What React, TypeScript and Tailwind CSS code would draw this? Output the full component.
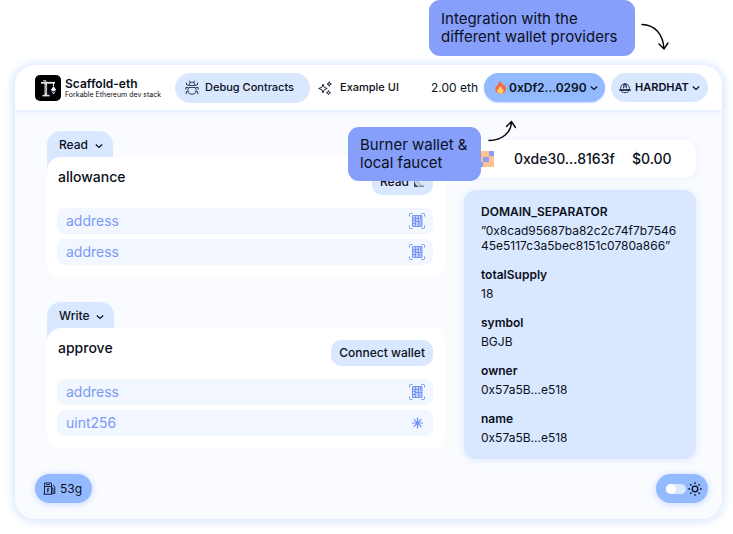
import type { ReactNode } from "react";

type IconProps = { className?: string };

function Chevron({ className = "" }: IconProps) {
  return (
    <svg viewBox="0 0 8 8" className={`h-2 w-2 ${className}`} fill="none" stroke="#0b1020" strokeWidth="1.2" aria-hidden="true">
      <path d="M.8 2.500 4 5.500 7.200 2.500" />
    </svg>
  );
}

function Logo() {
  return (
    <svg viewBox="0 0 26 26" className="h-[26px] w-[26px] shrink-0" aria-hidden="true">
      <rect width="26" height="26" rx="5" fill="#000" />
      <path d="M6 7.800h14" stroke="#e4e6ea" strokeWidth="1.800" fill="none" />
      <path d="M8 5.800h3v2M18.500 8v3" stroke="#e4e6ea" strokeWidth="1" fill="none" />
      <path d="M10.800 8v12.500" stroke="#d5d8de" strokeWidth="2.600" />
      <path d="m10 10 1.600 2-1.600 2 1.600 2-1.600 2" stroke="#5b616d" strokeWidth=".6" fill="none" />
      <path d="M7.500 20.600h7" stroke="#e4e6ea" strokeWidth="1.600" />
      <path d="m18.500 11 2.700 4-2.700 1.500-2.700-1.500z" fill="#f2f6ff" />
      <path d="m16 16 2.500 1.500L21 16l-2.500 3.500z" fill="#a9c3ff" />
    </svg>
  );
}

function BugIcon() {
  return (
    <svg viewBox="0 0 14 15" className="h-[15px] w-[14px]" fill="none" stroke="#1d2b4d" strokeWidth=".9" strokeLinejoin="round" aria-hidden="true">
      <path d="M4.300 5.500V4.300a2.700 2.300 0 0 1 5.400 0v1.200zM5.200 2.600 4.200.7M8.800 2.600l1-1.900" />
      <path d="M4 7.500h6c.9 1 1.100 2 1.100 3a4.100 3.700 0 0 1-8.200 0c0-1 .2-2 1.100-3z" />
      <path d="M4.300 5.500 1.500 4.800V2.500M9.700 5.500l2.800-.7V2.500M3.700 7.700.8 7.500v2.200M10.300 7.700l2.900-.2v2.200M3 11.500l-1.800.3v2.400M11 11.500l1.800.3v2.400" />
    </svg>
  );
}

function SparklesIcon() {
  return (
    <svg viewBox="0 0 14 14" className="h-[14px] w-[14px]" fill="none" stroke="#1d2333" strokeWidth="1" strokeLinejoin="round" aria-hidden="true">
      <path d="M5 3.200 6.200 6.300 9.200 7.500 6.200 8.700 5 11.800 3.800 8.700.7 7.500l3.100-1.200z" />
      <path d="m11.200.7.6 1.700 1.600.6-1.600.6-.6 1.700-.6-1.700L9 3l1.600-.6zM10.500 9.600l.6 1.500 1.500.6-1.500.6-.6 1.400-.6-1.400-1.400-.6 1.400-.6z" />
    </svg>
  );
}

function FlameIcon() {
  return (
    <svg viewBox="0 0 11 13" className="h-[13px] w-[11px]" aria-hidden="true">
      <path d="M5 0c.5 2 3 2.700 3.300 5 .4-.4.600-1 .6-1.600C10.200 4.800 11 6.600 10.800 8.600 10.500 11.400 8.300 13 5.500 13S.4 11.400.2 8.600C.1 6.900.9 5.500 1.500 4.500c.1.800.5 1.300 1 1.600C2.300 3.600 3.300 1.500 5 0z" fill="#f4683c" />
      <path d="M5.600 5c.2 1.500 2 2.100 2.200 3.700.3-.2.500-.6.6-1 .7 2.700-.5 5-2.900 5S2 11.400 2.200 9.300c.1-.8.400-1.300.7-1.800.2.500.5.8.900 1C3.800 7.200 4.400 6 5.600 5z" fill="#ffcb6b" />
    </svg>
  );
}

function HardhatIcon() {
  return (
    <svg viewBox="0 0 12 12" className="h-3 w-3" fill="none" stroke="#1d2b4d" strokeWidth=".9" aria-hidden="true">
      <path d="M1.500 7.500V6.300a4.500 4.500 0 0 1 9 0v1.200M4.300 6.500 5 1.900h2l.7 4.600M6 2v3.500" />
      <path d="M.6 7.500h10.800v1H.6zM2 8.700c.8 2.600 7.200 2.600 8 0" />
    </svg>
  );
}

function ScanIcon() {
  return (
    <svg viewBox="0 0 16 16" className="h-4 w-4 shrink-0" fill="none" stroke="#7696f0" strokeWidth="1" aria-hidden="true">
      <path d="M.5 3.500v-2a1 1 0 0 1 1-1h2M12.500.5h2a1 1 0 0 1 1 1v2M15.500 12.500v2a1 1 0 0 1-1 1h-2M3.500 15.500h-2a1 1 0 0 1-1-1v-2" />
      <path d="M3.500 2.500h9.500v11H3.500z" fill="#c4d3fb" />
      <path d="M6.500 2.500v11M9.500 2.500v11M3.500 5.500h6M6.500 8.500H13M3.500 10.500h3M9.500 11H13M11.500 3v4M3.500 7.500h3" />
    </svg>
  );
}

function AsteriskIcon() {
  return (
    <svg viewBox="0 0 16 16" className="h-4 w-4 shrink-0" fill="none" stroke="#6f8ef0" strokeWidth="1.200" aria-hidden="true">
      <path d="M8.500 2.500v11M3 8h11M4.600 4.100l7.800 7.800M12.400 4.100l-7.800 7.800" />
    </svg>
  );
}

function DishIcon() {
  return (
    <svg viewBox="0 0 12 12" className="h-3 w-3" aria-hidden="true">
      <path d="M2 2c0 5 3 8 9 8.500z" fill="#c3c8d0" />
      <path d="M1 4v7h5.500C3.500 10 2 7.500 1 4z" fill="#4a4f5a" />
      <path d="M6 11h5V9.500H6z" fill="#8d94a0" />
    </svg>
  );
}

function PumpIcon() {
  return (
    <svg viewBox="0 0 13 13" className="h-[13px] w-[13px]" fill="none" stroke="#15203c" strokeWidth="1" aria-hidden="true">
      <path d="M1.500 12V1h7v11M.5 12.200h9M1.500 4.500h7M3 2.700h4M6.200 6.300H4.700v4M4.700 8.300h1.500M8.500 6H10v5.500h1.800V5L10 3" />
    </svg>
  );
}

function SunIcon() {
  return (
    <svg viewBox="0 0 14 14" className="h-[14px] w-[14px]" fill="none" stroke="#0b1020" strokeWidth="1.300" aria-hidden="true">
      <circle cx="7" cy="7" r="2.800" />
      <path d="M7 .3V2M7 12v1.700M.3 7H2M12 7h1.700M2.300 2.300l1.200 1.200M10.500 10.500l1.200 1.200M11.700 2.300l-1.200 1.200M3.500 10.500l-1.200 1.200" />
    </svg>
  );
}

function Blockie() {
  return (
    <svg viewBox="0 0 18 16" className="h-4 w-[18px] shrink-0" shapeRendering="crispEdges" aria-hidden="true">
      <path d="M0 0h18v16H0z" fill="#ffc18f" />
      <path d="M13 0h5v5h-5zM7 6h6v5H7zM0 11h7v5H0zM0 0h3v5H0z" fill="#869ffb" />
    </svg>
  );
}

function MethodGroup({ kind, name, action, fields }: {
  kind: string;
  name: string;
  action: ReactNode;
  fields: { label: string; icon: ReactNode }[];
}) {
  return (
    <section>
      <label className="relative inline-flex h-10 items-start rounded-t-[14px] bg-[#d9e7ff] pr-2 pl-3 align-top">
        <select aria-label={`${kind} methods`} className="h-7 appearance-none pr-4 text-xs font-medium outline-none">
          <option>{kind}</option>
        </select>
        <Chevron className="pointer-events-none absolute top-[11px] right-[10px]" />
      </label>
      <div className="relative -mt-[14px] rounded-[14px] bg-white pt-3 pr-3 pb-[13px] pl-[10px]">
        <div className="flex items-start justify-between">
          <h2 className="pl-px text-sm leading-4 font-medium">{name}</h2>
          <button className="flex h-[26px] items-center gap-1 rounded-[10px] bg-[#d9e7ff] px-2 text-xs font-medium">{action}</button>
        </div>
        <div className="mt-[13px] flex flex-col gap-[5px]">
          {fields.map((field, i) => (
            <label key={i} className="flex h-[26px] items-center rounded-lg bg-[#f2f6ff] pr-2 pl-[9px]">
              <input
                aria-label={`${name} ${field.label} ${i + 1}`}
                placeholder={field.label}
                className="min-w-0 flex-1 text-sm leading-4 outline-none placeholder:text-[#7b9af5]"
              />
              {field.icon}
            </label>
          ))}
        </div>
      </div>
    </section>
  );
}

const variables = [
  { label: "DOMAIN_SEPARATOR", lines: ["”0x8cad95687ba82c2c74f7b7546", "45e5117c3a5bec8151c0780a866”"] },
  { label: "totalSupply", lines: ["18"] },
  { label: "symbol", lines: ["BGJB"] },
  { label: "owner", lines: ["0x57a5B...e518"] },
  { label: "name", lines: ["0x57a5B...e518"] },
];

export default function App() {
  return (
    <div className="bg-white pr-[11px] pb-[15px] pl-[15px] font-['Inter','Noto_Sans',sans-serif] text-[#0b1020]">
      <div className="flex h-[65px] items-start justify-end pr-[53px]">
        <p className="h-14 w-[206px] rounded-[11px] bg-[#869ffb] pt-[10px] pl-3 text-[15px] leading-[18px] whitespace-nowrap">
          Integration with the
          <br />
          different wallet providers
        </p>
        <svg viewBox="0 0 28 28" className="mt-[23px] ml-[6px] h-7 w-7" fill="none" stroke="#000" strokeWidth="1.400" strokeLinecap="round" aria-hidden="true">
          <path d="M1 1.500C14 2 22 11 23 26M18 21l5 5 4-6" />
        </svg>
      </div>

      <div className="relative rounded-[20px] bg-[#fafbff] shadow-[0_1px_8px_3px_#dfebff]">
        <header className="flex h-[45px] items-center rounded-t-[20px] bg-white pr-[14px] pl-5 shadow-[0_1px_6px_1px_#e3edff]">
          <Logo />
          <div className="ml-1 w-[110px]">
            <p className="text-xs leading-[14px] font-semibold">Scaffold-eth</p>
            <p className="text-[7px] leading-2 whitespace-nowrap">Forkable Ethereum dev stack</p>
          </div>
          <nav className="flex items-center gap-2 text-[11px] font-medium whitespace-nowrap">
            <a href="#debug" className="flex h-[30px] w-[135px] items-center gap-[6px] rounded-full bg-[#d9e7ff] pl-[10px]">
              <BugIcon />
              Debug Contracts
            </a>
            <a href="#example" className="flex items-center gap-2">
              <SparklesIcon />
              Example UI
            </a>
          </nav>
          <div className="ml-auto flex items-center">
            <span className="mr-[6px] text-xs whitespace-nowrap">2.00 eth</span>
            <button aria-haspopup="menu" className="flex h-[29px] w-[121px] items-center gap-[3px] rounded-full bg-[#93baff] pl-[11px] text-xs font-semibold shadow-[0_1px_2px_#c4d9ff]">
              <FlameIcon />
              0xDf2...0290
              <Chevron />
            </button>
            <label className="relative ml-[6px] flex h-[29px] w-[97px] items-center gap-1 rounded-full bg-[#d9e7ff] pl-2">
              <HardhatIcon />
              <select aria-label="Network" className="appearance-none text-[11px] font-semibold outline-none">
                <option>HARDHAT</option>
              </select>
              <Chevron className="pointer-events-none absolute right-2" />
            </label>
          </div>
        </header>

        <main className="flex items-start gap-[19px] pt-[21px] pr-[26px] pl-8">
          <div className="flex min-w-0 flex-1 flex-col gap-6">
            <MethodGroup
              kind="Read"
              name="allowance"
              action={<>Read <DishIcon /></>}
              fields={[{ label: "address", icon: <ScanIcon /> }, { label: "address", icon: <ScanIcon /> }]}
            />
            <MethodGroup
              kind="Write"
              name="approve"
              action="Connect wallet"
              fields={[{ label: "address", icon: <ScanIcon /> }, { label: "uint256", icon: <AsteriskIcon /> }]}
            />
          </div>

          <aside className="w-[232px] shrink-0 pt-[9px]">
            <div className="flex h-[38px] items-center rounded-xl bg-white pl-3 text-sm font-medium shadow-[0_1px_6px_#e8f0ff]">
              <Blockie />
              <span className="ml-5 w-[118px]">0xde30...8163f</span>
              <span>$0.00</span>
            </div>
            <dl className="mt-3 flex flex-col gap-[14px] rounded-xl bg-[#d9e7ff] px-[17px] py-[14px] shadow-[0_1px_6px_1px_#e3edff]">
              {variables.map((v) => (
                <div key={v.label}>
                  <dt className="text-xs leading-4 font-semibold">{v.label}</dt>
                  <dd className="mt-[3px] text-xs leading-[15px] whitespace-nowrap">
                    {v.lines.map((line) => (
                      <span key={line} className="block">{line}</span>
                    ))}
                  </dd>
                </div>
              ))}
            </dl>
          </aside>
        </main>

        <footer className="flex items-center justify-between pt-[15px] pr-[14px] pb-4 pl-5">
          <button className="flex h-[29px] w-[57px] items-center gap-1 rounded-full bg-[#93baff] pl-2 text-xs shadow-[0_1px_6px_1px_#cfe0ff]">
            <PumpIcon />
            53g
          </button>
          <label className="flex h-[29px] w-[52px] items-center gap-[2px] rounded-full bg-[#93baff] pl-[10px] shadow-[0_1px_6px_1px_#cfe0ff]">
            <input
              type="checkbox"
              aria-label="Dark theme"
              className="h-[10px] w-5 shrink-0 appearance-none rounded-full bg-[#d9e7ff] before:block before:h-[10px] before:w-[10px] before:rounded-full before:bg-white checked:before:ml-[10px]"
            />
            <SunIcon />
          </label>
        </footer>

        <div className="absolute top-[55px] right-[206px] flex items-start">
          <p className="mt-[7px] h-[54px] w-[133px] rounded-[11px] bg-[#869ffb] pt-[9px] pl-3 text-[15px] leading-[18px] whitespace-nowrap">
            Burner wallet &amp;
            <br />
            local faucet
          </p>
          <svg viewBox="0 0 28 28" className="ml-[7px] h-7 w-7" fill="none" stroke="#000" strokeWidth="1.400" strokeLinecap="round" aria-hidden="true">
            <path d="M1 20.500C14 20 23 13 23.500 2M18.500 6.500l5-5 4 6" />
          </svg>
        </div>
      </div>
    </div>
  );
}
